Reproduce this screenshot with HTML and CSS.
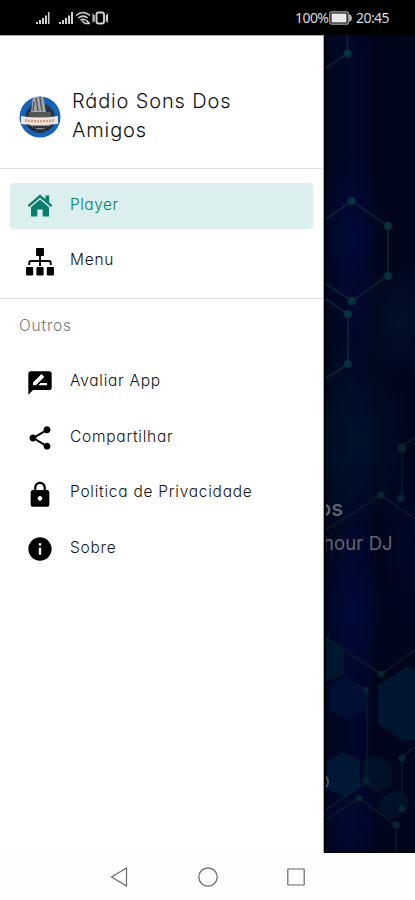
FILE: index.html
```html
<!DOCTYPE html>
<html lang="pt">
<head>
<meta charset="utf-8">
<title>Rádio Sons Dos Amigos</title>
<link rel="stylesheet" href="styles.css">
</head>
<body>
<header class="status">
  <svg class="signals" width="76" height="16" viewBox="0 0 76 16" fill="#d0d0d0">
    <path d="M0 12h2v2H0zM3 10h2v4H3zM6 8h2v6H6zM9 5.500h2V14H9zM12 2h1.500v12H12zM23 12h2v2h-2zM26 10h2v4h-2zM29 8h2v6h-2zM32 5.500h2V14h-2zM35 2h2v12h-2z"/>
    <g fill="none" stroke="#d0d0d0" stroke-width="1.600">
      <path d="M40 5.500Q47 -.5 54 5.500M42.300 8Q47 4.200 51.700 8M44.500 10.200Q47 8.500 49.500 10.200"/>
      <path d="M46 11l3 2.500h5M50 10l3 3"/>
      <rect x="60.500" y="2.500" width="7.500" height="11" rx="2" stroke-width="1.900"/>
      <path d="M58 5v6.500M70.500 5v6.500" stroke-width="1.400"/>
      <path d="M71.500 3.500v9M57 3.500v9" stroke-width="1"/>
    </g>
  </svg>
  <span class="percent">100%</span>
  <svg class="battery" width="23" height="14" viewBox="0 0 23 14">
    <rect x=".8" y=".8" width="18.500" height="12.400" rx="2" fill="none" stroke="#aaa" stroke-width="1.200"/>
    <rect x="2.500" y="2.500" width="15" height="9" fill="#e8e8e8"/>
    <path d="M20 3q3 1 3 4t-3 4z" fill="#aaa"/>
  </svg>
  <span class="clock">20:45</span>
</header>
<main class="screen">
  <aside class="drawer">
    <div class="brand">
      <svg width="42" height="42" viewBox="0 0 42 42">
        <defs><clipPath id="disc"><circle cx="21" cy="21" r="20.500"/></clipPath></defs>
        <g clip-path="url(#disc)">
          <path fill="#1763b5" d="M0 0h42v42H0z"/>
          <circle cx="21" cy="22" r="15" fill="#243447"/>
          <path d="M14 0h10l3 16H12z" fill="#a4a5a7"/>
          <path d="M17 2l2 13M21 1l2 14M15 6l-1 9" stroke="#55565a" stroke-width="1.500"/>
          <path d="M10 16h22v13H10z" fill="#555"/>
          <path d="M8 28q13 13 26 0" fill="#8b969b" stroke="#23272a" stroke-width="2"/>
          <path d="M14 31h15M17 34h10" stroke="#30373b" stroke-width="2"/>
          <path d="M2 20q19 3 37 0v8q-18 2-37 0z" fill="#eee5df"/>
          <path d="M6 24.500q15 1.500 29 0" fill="none" stroke="#d89c85" stroke-width="2.500" stroke-dasharray="2 1"/>
        </g>
      </svg>
      <h1>Rádio Sons Dos<br>Amigos</h1>
    </div>
    <nav class="group primary">
      <a class="item active"><svg class="icon" width="28" height="28" viewBox="0 0 28 28" fill="currentColor"><path d="M14 2.500l5.500 4.700V3.500h3.700v6.900l3.200 2.800-1.600 1.900L14 5.800 3.200 15.100l-1.600-1.900z"/><path d="M14 7.500l9 7.800v9.200h-6.300v-7h-5.400v7H5v-9.200z"/></svg><span>Player</span></a>
      <a class="item"><svg class="icon" width="28" height="28" viewBox="0 0 28 28" fill="currentColor"><rect x="10" y="0" width="8" height="8" rx="1"/><rect x="0" y="19" width="7.200" height="8.500" rx="1"/><rect x="10.400" y="19" width="7.200" height="8.500" rx="1"/><rect x="20.800" y="19" width="7.200" height="8.500" rx="1"/><path d="M14 7v11M3.300 17v-2.300q0-1.700 1.700-1.700h18q1.700 0 1.700 1.700V17" fill="none" stroke="currentColor" stroke-width="1.900"/></svg><span>Menu</span></a>
    </nav>
    <nav class="group others">
      <h2>Outros</h2>
      <a class="item"><svg class="icon" width="28" height="28" viewBox="0 0 24 24" fill="currentColor"><path d="M20 2H4c-1.100 0-2 .9-2 2v18l4-4h14c1.100 0 2-.9 2-2V4c0-1.100-.9-2-2-2zM6 14v-2.470l6.880-6.880c.2-.2.510-.2.710 0l1.770 1.770c.2.200.2.510 0 .710L8.470 14H6zm12 0h-7.500l2-2H18v2z"/></svg><span>Avaliar App</span></a>
      <a class="item"><svg class="icon" width="28" height="28" viewBox="0 0 24 24" fill="currentColor"><path d="M18 16.080c-.76 0-1.440.3-1.960.77L8.910 12.700c.05-.23.090-.46.090-.7s-.04-.47-.09-.7l7.050-4.110c.54.500 1.250.81 2.040.81 1.660 0 3-1.340 3-3s-1.340-3-3-3-3 1.340-3 3c0 .24.040.47.090.7L8.040 9.810C7.500 9.310 6.790 9 6 9c-1.660 0-3 1.340-3 3s1.340 3 3 3c.79 0 1.500-.31 2.040-.81l7.120 4.160c-.05.210-.08.430-.08.650 0 1.610 1.310 2.920 2.920 2.920s2.920-1.310 2.920-2.920-1.310-2.920-2.920-2.920z"/></svg><span>Compartilhar</span></a>
      <a class="item"><svg class="icon" width="28" height="28" viewBox="0 0 24 24" fill="currentColor"><path d="M18 8.500h-1V6.500c0-2.760-2.240-5-5-5S7 3.740 7 6.500v2H6c-1.100 0-2 .9-2 2V21c0 1.100.9 2 2 2h12c1.100 0 2-.9 2-2V10.500c0-1.100-.9-2-2-2zm-6 9.200c-1.100 0-2-.9-2-2s.9-2 2-2 2 .9 2 2-.9 2-2 2zm3.100-9.200H8.900V6.500c0-1.710 1.390-3.100 3.100-3.100s3.100 1.390 3.100 3.100v2z"/></svg><span>Politica de Privacidade</span></a>
      <a class="item"><svg class="icon" width="28" height="28" viewBox="0 0 24 24" fill="currentColor"><path d="M12 2C6.480 2 2 6.480 2 12s4.480 10 10 10 10-4.480 10-10S17.520 2 12 2zm1 15h-2v-6h2v6zm0-8h-2V7h2v2z"/></svg><span>Sobre</span></a>
    </nav>
  </aside>
  <section class="backdrop">
    <svg class="art" width="92" height="818" viewBox="326 35 92 818">
      <defs>
        <linearGradient id="shade"><stop offset="0" stop-color="#00071c"/><stop offset=".3" stop-color="#000728"/><stop offset=".44" stop-color="#000529"/><stop offset=".52" stop-color="#00051b"/><stop offset="1" stop-color="#00061c"/></linearGradient>
        <radialGradient id="glow"><stop offset="0" stop-color="#000b3c" stop-opacity=".8"/><stop offset="1" stop-color="#000b3c" stop-opacity="0"/></radialGradient>
        <radialGradient id="teal"><stop offset="0" stop-color="#00142a" stop-opacity=".8"/><stop offset="1" stop-color="#00142a" stop-opacity="0"/></radialGradient>
      </defs>
      <path fill="url(#shade)" d="M323 35h95v818h-95z"/>
      <ellipse cx="352" cy="240" rx="34" ry="95" fill="url(#glow)"/>
      <ellipse cx="355" cy="440" rx="60" ry="110" fill="url(#teal)"/>
      <ellipse cx="400" cy="320" rx="50" ry="60" fill="url(#teal)"/>
      <ellipse cx="352" cy="610" rx="36" ry="90" fill="url(#glow)"/>
      <ellipse cx="407" cy="545" rx="28" ry="80" fill="url(#glow)" opacity=".5"/>
      <ellipse cx="350" cy="820" rx="45" ry="50" fill="url(#glow)" opacity=".6"/>
      <g fill="#00162f">
        <path d="M323 636l21 12v26l-21 9z"/>
        <path d="M346 675l19 13v22l-19 9-16-9v-25z" fill="#001034"/>
        <path d="M407 667l8 4v69l-12 1-25-17v-39z"/>
        <path d="M344 752l16 9v27l-16 9-17-9v-27z" fill="#001736"/>
        <path d="M375 755l17 9v22l-16 7-14-9v-22zM395 790l13 6v12l-15 11-13-8v-13z" fill="#001026"/>
      </g>
      <g fill="none" stroke="#062c39" stroke-width="1.400">
        <path d="M347.500 35v18.500L323 70M323 221l28.500-20 36.500 25v50l-36 25-29-19M323 297l25 17v50l-25 16"/>
        <g stroke="#04222f" stroke-width="1.200"><path d="M415 437l-13 10v51M323 532l58-37 34 24"/><path d="M323 636l58 38 34-24M367 690v92l-44 30M323 822l36-24 37 27v28M415 746l-13 12v51"/></g>
      </g>
      <g fill="#07313d"><circle cx="347.500" cy="53.500" r="4"/><circle cx="351.500" cy="201" r="4"/><circle cx="388" cy="226" r="4"/><circle cx="388" cy="276" r="4"/><circle cx="352" cy="301" r="4"/><circle cx="348" cy="314" r="4"/><circle cx="348" cy="364" r="4"/></g>
      <g fill="#042632"><circle cx="402" cy="448" r="4"/><circle cx="401" cy="498" r="3.500"/><circle cx="381" cy="495" r="3.500"/><circle cx="381" cy="674" r="3.500"/><circle cx="366" cy="690" r="3"/><circle cx="366" cy="781" r="3.500"/><circle cx="359" cy="798" r="3.500"/><circle cx="396" cy="825" r="3.500"/><circle cx="402" cy="758" r="3.500"/><circle cx="402" cy="809" r="3.500"/></g>
    </svg>
    <div class="track">
      <strong>os</strong>
      <span>hour DJ</span>
      <i class="ring"></i>
    </div>
  </section>
</main>
<footer class="keys">
  <svg width="18" height="22" viewBox="0 0 18 22"><path d="M16.500 2v18L1.500 11z"/></svg>
  <svg width="22" height="22" viewBox="0 0 22 22"><circle cx="11" cy="11" r="9.200"/></svg>
  <svg width="18" height="22" viewBox="0 0 18 22"><rect x=".8" y="3" width="16.400" height="16" rx=".5"/></svg>
</footer>
</body>
</html>
```
FILE: styles.css
```css
* { box-sizing: border-box; }
body {
  margin: 0;
  width: 415px;
  height: 900px;
  display: flex;
  flex-direction: column;
  overflow: hidden;
  background: #fdfdfd;
  color: #111;
  font-family: Inter, "Open Sans", sans-serif;
  font-weight: 300;
  font-feature-settings: "cv11";
}
.status {
  height: 35px;
  display: flex;
  align-items: center;
  padding: 0 0 0 36px;
  background: #000;
  color: #ddd;
  font: 400 14px "Noto Sans", sans-serif;
  letter-spacing: -.55px;
}
.percent { margin-left: 183px; width: 34px; white-space: nowrap; }
.battery { flex: none; }
.clock { margin-left: 4px; }
.screen { height: 818px; display: flex; }
.drawer {
  width: 324px;
  flex: none;
  background: #fff;
  border-right: 1px solid #aaa;
  border-top: 1px solid #aaa;
}
.brand {
  height: 133px;
  display: flex;
  align-items: center;
  gap: 11px;
  padding: 29px 0 0 19px;
  border-bottom: 1px solid #ddd;
}
.brand h1 {
  margin: -2px 0 0;
  font-size: 20px;
  font-weight: 300;
  line-height: 29px;
  letter-spacing: .85px;
  white-space: nowrap;
}
.group { padding: 0 10px; }
.primary {
  height: 130px;
  padding-top: 14px;
  border-bottom: 1px solid #ddd;
}
.item {
  height: 46px;
  margin-bottom: 9.500px;
  padding-left: 16px;
  display: flex;
  align-items: center;
  gap: 16px;
  border-radius: 4px;
  font-size: 15.500px;
  letter-spacing: .75px;
  white-space: nowrap;
}
.item span { margin-top: -4px; }
.active span { letter-spacing: .5px; }
.icon { flex: none; color: #000; }
.active { background: #dbefee; color: #087d6b; }
.active .icon { color: #087d6b; }
.others .item { position: relative; top: -.5px; }
.others h2 {
  height: 61px;
  margin: 0;
  padding: 17px 0 0 9px;
  color: #777;
  font-size: 15.500px;
  font-weight: 300;
  line-height: 20px;
  letter-spacing: .8px;
}
.backdrop {
  width: 91px;
  display: grid;
  overflow: hidden;
  border-left: 2px solid #000;
  border-bottom: 1px solid #000;
}
.art, .track { grid-area: 1 / 1; }
.track {
  display: flex;
  flex-direction: column;
  height: 817px;
  padding-top: 460px;
  color: #626770;
  font-size: 18.500px;
  font-weight: 400;
  line-height: 26px;
}
.track strong { margin-left: -8px; font-size: 22px; font-weight: 500; }
.track span { margin: 9px 0 0 -3px; white-space: nowrap; letter-spacing: .1px; }
.ring {
  width: 18px;
  height: 18px;
  margin: 217px 0 0 -15px;
  border: 2px solid #4d535d;
  border-radius: 50%;
}
.keys {
  height: 47px;
  display: flex;
  align-items: center;
  padding: 1px 110px 0 110px;
  justify-content: space-between;
  background: #fdfdfd;
}
.keys svg { fill: none; stroke: #666; stroke-width: 1.200; }
```
